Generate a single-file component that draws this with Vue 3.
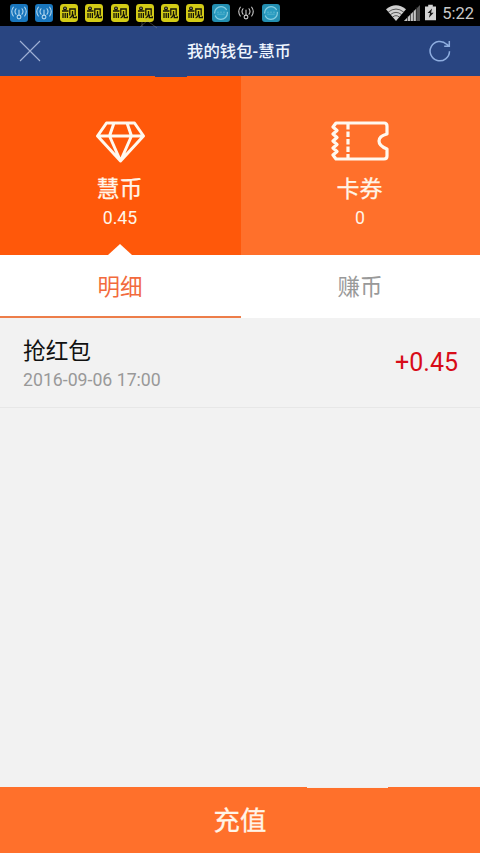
<script setup>
const notices = ['beacon', 'beacon', 'video', 'video', 'video', 'video', 'video', 'video', 'ring', 'plain', 'ring']
</script>

<template>
  <main class="screen">
    <div class="status">
      <div class="notices">
        <svg v-for="(kind, i) in notices" :key="i" class="notice" viewBox="0 0 18 18">
          <template v-if="kind === 'beacon' || kind === 'plain'">
            <rect v-if="kind === 'beacon'" width="18" height="18" rx="3" fill="#1976bd" />
            <g fill="none" :stroke="kind === 'beacon' ? '#b4d8ee' : '#c9c9c9'" stroke-width="1.1" stroke-linecap="round">
              <path d="M3.3 3.2Q.2 7.6 3.3 12M14.7 3.2Q17.8 7.6 14.7 12M6 4.8Q4 7.6 6 10.2M12 4.8Q14 7.6 12 10.2" />
              <path d="M9 6v5" />
              <circle cx="9" cy="13" r="1.9" />
            </g>
          </template>
          <template v-else-if="kind === 'video'">
            <rect width="18" height="18" rx="3.4" fill="#d3cb16" />
            <path d="M2 7h6.5M3 9v5M5.2 9v5M7.4 9v5M9.8 11.5V5h5.4v6.5M12.5 7v3Q12.3 13 9.6 14M13.3 10.5v3.2h3v-1.5" fill="none" stroke="#171608" stroke-width="1.3" />
            <circle cx="5" cy="4.4" r="2" fill="#171608" />
            <circle cx="5" cy="4.2" r=".8" fill="#b9b8ac" />
          </template>
          <template v-else>
            <rect width="18" height="18" rx="3" fill="#238eb0" />
            <circle cx="9" cy="9" r="6.4" fill="#299bc0" stroke="#87cde0" stroke-width="1.2" stroke-dasharray="17 2" />
            <path d="M5 8.2h2.2M8 8.2h2M11 8.2h2M5.3 10.2h7.4" stroke="#55b2cb" stroke-width="1" />
          </template>
        </svg>
      </div>
      <div class="system">
        <svg class="wifi" viewBox="0 0 20 16">
          <path d="M0 4.2Q10-3.6 20 4.2L10 16Z" fill="#cfcfcf" />
          <path d="M2.2 7.1Q10 1 17.8 7.1M4.3 9.7Q10 5 15.7 9.7M6.5 12.2Q10 9.1 13.5 12.2" fill="none" stroke="#222" stroke-width=".7" />
        </svg>
        <svg class="signal" viewBox="0 0 16 16">
          <path d="M16 0v16H0Z" fill="#555" />
          <path d="M12 4v12H0Z" fill="#c4c4c4" />
          <path d="M3.5 11v5M6.5 8v8M9.4 5v11M12.3 2v14" stroke="#222" stroke-width=".7" />
        </svg>
        <svg class="battery" viewBox="0 0 12 17">
          <path d="M3.5 0h5v2H12v15H0V2h3.5Z" fill="#d3d3d3" />
          <path d="M7.7 4.2 2.8 9h2.7l-1.2 5.3L9.4 8.8H6.6Z" fill="#171717" />
        </svg>
        <span class="clock">5:22</span>
      </div>
    </div>

    <header class="header">
      <svg class="close" viewBox="0 0 22 22"><path d="M1 1 21 21M21 1 1 21" /></svg>
      <h1>我的钱包-慧币</h1>
      <svg class="refresh" viewBox="0 0 22 22">
        <path d="M20.5 11.2A9.7 9.7 0 1 1 17.6 4.2L20 6.2M20.3 1v5.2h-5.1" />
      </svg>
      <svg class="streak" viewBox="0 0 20 22"><path d="M1 8 9 1M3 2v6M6 0 18 9" /></svg>
    </header>

    <section class="wallet">
      <div class="panel selected">
        <svg class="diamond" viewBox="0 0 50 42">
          <path d="M11 2h28l9 13-23 25L2 15ZM2 15h46M18.5 2l-4.5 13 11 25 11-25-4.500-13" />
        </svg>
        <span class="name">慧币</span>
        <span class="amount">0.45</span>
      </div>
      <div class="panel">
        <svg class="ticket" viewBox="0 0 58 40">
          <path d="M5 2H53Q56 2 56 5V13Q48 15 48 20Q48 25 56 28V35Q56 38 53 38H5L2 34L6 30.5L2 27L6 23.5L2 20L6 16.5L2 13L6 9.500L2 6Z" />
          <path d="M17 3v34" stroke-dasharray="5.5 2" />
        </svg>
        <span class="name">卡券</span>
        <span class="amount">0</span>
      </div>
    </section>

    <nav class="tabs">
      <span class="tab active">明细</span>
      <span class="tab">赚币</span>
    </nav>

    <section class="records">
      <article class="record">
        <div>
          <div class="event">抢红包</div>
          <time>2016-09-06 17:00</time>
        </div>
        <strong>+0.45</strong>
      </article>
    </section>

    <button class="recharge">充值</button>
  </main>
</template>

<style>
body { margin: 0; }
</style>

<style scoped>
.screen {
  width: 480px;
  height: 853px;
  display: flex;
  flex-direction: column;
  overflow: hidden;
  background: #f2f2f2;
  font-family: Roboto, "Noto Sans CJK SC", sans-serif;
}
.status {
  height: 26px;
  flex: none;
  display: flex;
  justify-content: space-between;
  box-sizing: border-box;
  padding: 0 6px 0 9.5px;
  background: #000;
}
.notices { display: flex; gap: 7.25px; padding-top: 4px; }
.notice { width: 18px; height: 18px; }
.system { display: flex; padding-top: 4px; }
.wifi { width: 20px; height: 16px; margin-top: 1px; }
.signal { width: 16px; height: 16px; margin: 1px 5px 0 -2px; }
.battery { width: 11px; height: 17px; margin-right: 6px; }
.clock { color: #c9c9c9; font-size: 16.5px; line-height: 20px; }
.header {
  position: relative;
  z-index: 1;
  height: 50px;
  flex: none;
  display: flex;
  align-items: center;
  justify-content: space-between;
  box-sizing: border-box;
  padding: 0 29px 0 19px;
  background: #294581;
}
.header::after {
  content: "";
  position: absolute;
  top: 50px;
  left: 155px;
  width: 32px;
  height: 1px;
  background: #294581;
}
.close, .refresh { width: 22px; height: 22px; fill: none; stroke: #a0b1d5; stroke-width: 1.1; }
.refresh { stroke: #8faee0; stroke-width: 1.5; }
.streak {
  position: absolute;
  left: 139px;
  top: -7px;
  width: 20px;
  height: 22px;
  fill: none;
  stroke: #a0a69a;
  stroke-opacity: .35;
}
h1 { margin: 2px 0 0 8px; color: #eef5ff; font-size: 16.4px; line-height: 24px; font-weight: 500; }
.wallet { display: flex; height: 179px; flex: none; }
.panel {
  position: relative;
  width: 239px;
  display: flex;
  flex-direction: column;
  align-items: center;
  background: #ff702b;
  color: #fff5e8;
}
.selected { width: 241px; background: #ff580a; }
.selected::after {
  content: "";
  position: absolute;
  bottom: 0;
  left: 108px;
  border: solid transparent;
  border-width: 0 12px 11px;
  border-bottom-color: #fff;
}
.panel svg { fill: none; stroke: #fff8ef; stroke-width: 3.2; stroke-linejoin: round; margin-top: 45px; }
.diamond { width: 51px; height: 42px; }
.panel .diamond { stroke-width: 3; margin-right: 1px; }
.ticket { width: 58px; height: 40px; }
.panel .ticket { margin-bottom: 2px; margin-right: 2px; }
.name { margin-top: 12px; margin-right: 2px; font-size: 23px; line-height: 30px; -webkit-text-stroke: .25px; }
.amount { margin-top: 1px; margin-right: 1px; font-size: 17.700px; line-height: 24px; }
.tabs { height: 62.5px; flex: none; display: flex; background: #fff; }
.tab { width: 239px; box-sizing: border-box; padding-right: 1px; text-align: center; color: #999; font-size: 22.5px; line-height: 64px; }
.active { width: 241px; height: 62.5px; border-bottom: 2px solid #ed7d49; color: #f26a3d; }
.records { flex: 1; }
.record {
  height: 90px;
  display: flex;
  justify-content: space-between;
  align-items: center;
  box-sizing: border-box;
  border-bottom: 1px solid #e7e7e7;
  padding: 0 22px 0 23px;
}
.event { margin-top: 4px; color: #111; font-size: 22.7px; line-height: 30px; }
time { display: block; color: #999; font-size: 17.7px; line-height: 24px; margin-top: 1px; }
strong { color: #d80c18; font-size: 25px; font-weight: 400; }
.recharge {
  position: relative;
  height: 66px;
  flex: none;
  border: 0;
  padding: 3px 0 0;
  background: #ff702b;
  color: #fff5e8;
  font: 400 26.4px/63px Roboto, "Noto Sans CJK SC", sans-serif;
  -webkit-text-stroke: .3px;
}
.recharge::before {
  content: "";
  position: absolute;
  top: 0;
  left: 307px;
  width: 81px;
  height: 1px;
  background: #f5eee9;
}
</style>
